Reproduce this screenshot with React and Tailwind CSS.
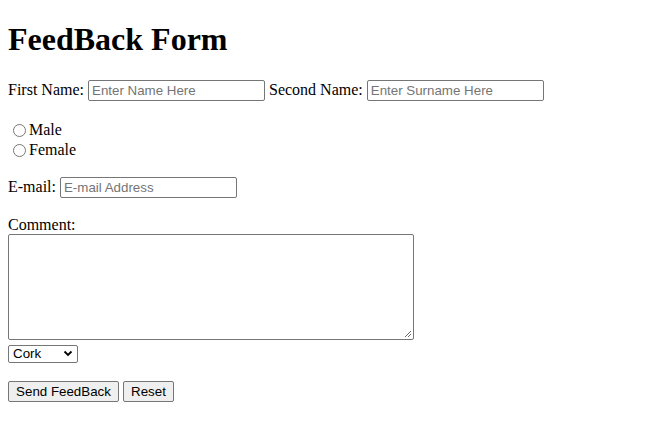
import React from "react";

const inputCls =
  "h-[21px] w-[177px] border border-[#767676] rounded-[2px] px-[3px] font-['Liberation_Sans',Arial,sans-serif] text-[13.33px] leading-[15px] text-black placeholder:text-[#757575] outline-none bg-white";

const btnCls =
  "h-[21px] border border-[#767676] rounded-[2px] bg-[#efefef] px-[7px] pb-[1px] font-['Liberation_Sans',Arial,sans-serif] text-[13.33px] leading-[15px] text-black";

function Radio({ label }) {
  return (
    <label className="flex h-[20px] items-center">
      <span className="ml-[5px] mr-[3px] mt-[1px] inline-block h-[13px] w-[13px] rounded-full border border-[#767676] bg-white" />
      <span>{label}</span>
    </label>
  );
}

export default function App() {
  return (
    <div className="px-2 pb-4 font-['Liberation_Serif','Times_New_Roman',serif] text-[16px] leading-[18px] text-black bg-white min-h-[447px]">
      <h1 className="pt-[21px] h-[58px] text-[32px] font-bold leading-[37px]">FeedBack Form</h1>

      <form onSubmit={(e) => e.preventDefault()}>
        <div className="mt-[22px] flex h-[21px] items-center">
          <span className="mb-[2px]">First Name:</span>
          <input className={`${inputCls} ml-[4px]`} placeholder="Enter Name Here" />
          <span className="ml-[4px] mb-[2px]">Second Name:</span>
          <input className={`${inputCls} ml-[4px]`} placeholder="Enter Surname Here" />
        </div>

        <div className="mt-[19px]">
          <Radio label="Male" />
          <Radio label="Female" />
        </div>

        <div className="mt-[17px] flex h-[21px] items-center">
          <span className="mb-[2px]">E-mail:</span>
          <input className={`${inputCls} ml-[4px]`} placeholder="E-mail Address" />
        </div>

        <div className="mt-[18px] h-[18px]">Comment:</div>
        <div className="relative h-[106px] w-[406px]">
          <textarea className="block h-[106px] w-[406px] resize-none border border-[#767676] rounded-[2px] bg-white outline-none" />
          <svg className="absolute bottom-[2px] right-[2px]" width="8" height="8" viewBox="0 0 8 8">
            <path d="M1 7 L7 1 M4 7 L7 4" stroke="#6b6b6b" strokeWidth="1" />
          </svg>
        </div>

        <div className="mt-[5px] flex h-[18px] w-[70px] items-center justify-between border border-[#767676] rounded-[2px] bg-white pl-[4px] pr-[4px] pb-[1px] font-['Liberation_Sans',Arial,sans-serif] text-[13.33px] leading-[15px]">
          <span>Cork</span>
          <svg width="10" height="7" viewBox="0 0 10 7">
            <path d="M1.5 1.5 L5 5 L8.5 1.5" stroke="#000" strokeWidth="1.8" fill="none" />
          </svg>
        </div>

        <div className="mt-[18px] flex gap-[4px]">
          <button type="submit" className={`${btnCls} w-[111px]`}>Send FeedBack</button>
          <button type="reset" className={`${btnCls} w-[51px]`}>Reset</button>
        </div>
      </form>
    </div>
  );
}
